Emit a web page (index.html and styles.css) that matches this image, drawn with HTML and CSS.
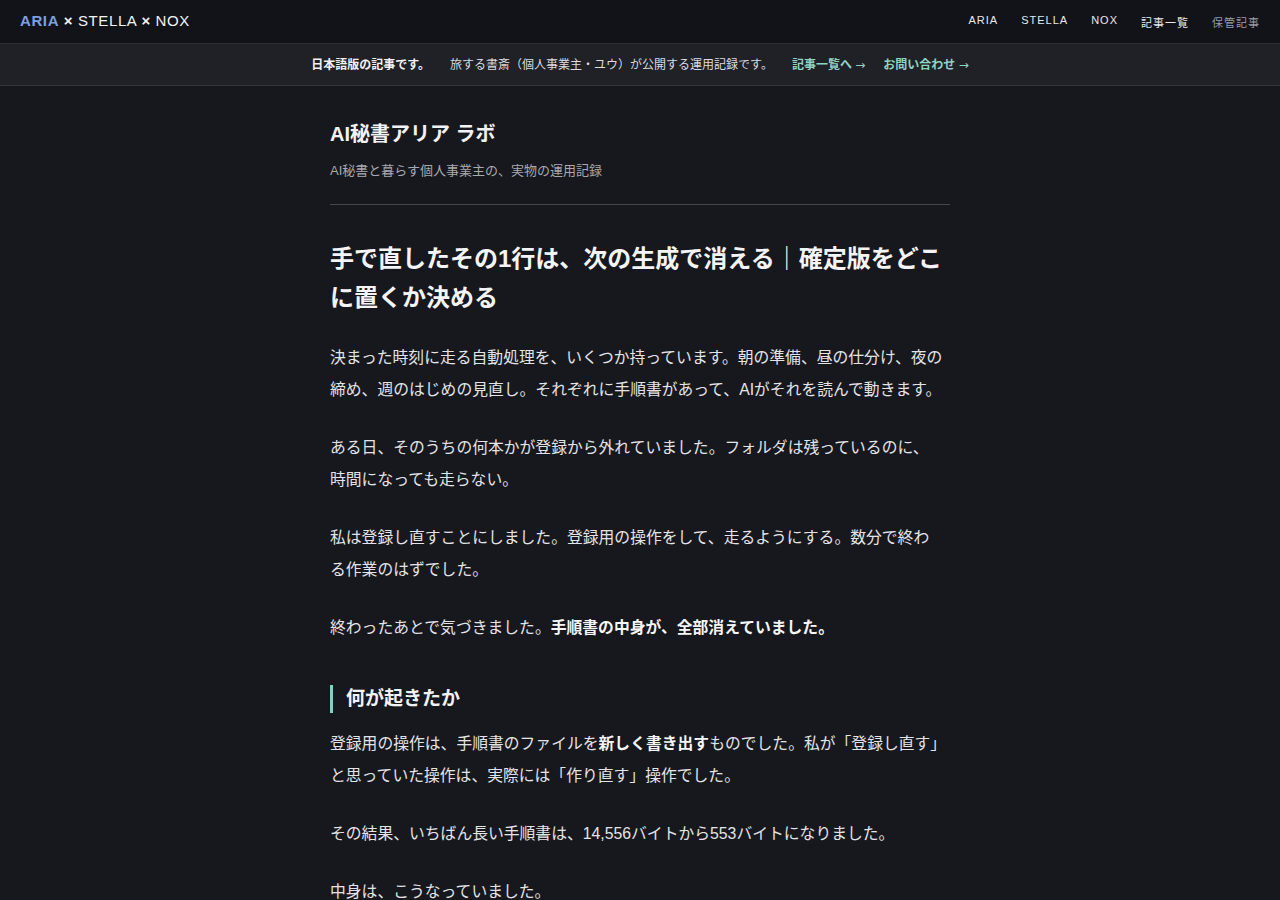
FILE: index.html
```html
<!DOCTYPE html>
<html lang="ja">
<head>
<meta charset="utf-8">
<title>AI秘書アリア ラボ</title>
<link rel="stylesheet" href="styles.css">
</head>
<body>
<header class="topnav">
  <div class="brand"><span class="brand-aria">ARIA</span> <span class="brand-x">×</span> STELLA <span class="brand-x">×</span> NOX</div>
  <nav class="navlinks">
    <a class="navlink" href="#">ARIA</a>
    <a class="navlink" href="#">STELLA</a>
    <a class="navlink" href="#">NOX</a>
    <a class="navlink" href="#">記事一覧</a>
    <a class="navlink navlink-muted" href="#">保管記事</a>
  </nav>
</header>
<div class="notice">
  <span class="notice-strong">日本語版の記事です。</span>
  <span class="notice-text">旅する書斎（個人事業主・ユウ）が公開する運用記録です。</span>
  <a class="notice-link" href="#">記事一覧へ <span class="arrow">→</span></a>
  <a class="notice-link" href="#">お問い合わせ <span class="arrow">→</span></a>
</div>
<main class="content">
  <div class="site-head">
    <div class="site-title">AI秘書アリア ラボ</div>
    <div class="site-sub">AI秘書と暮らす個人事業主の、実物の運用記録</div>
  </div>
  <article class="post">
    <h1 class="post-title">手で直したその1行は、次の生成で消える｜確定版をどこに置くか決める</h1>
    <p>決まった時刻に走る自動処理を、いくつか持っています。朝の準備、昼の仕分け、夜の<br>締め、週のはじめの見直し。それぞれに手順書があって、AIがそれを読んで動きます。</p>
    <p>ある日、そのうちの何本かが登録から外れていました。フォルダは残っているのに、<br>時間になっても走らない。</p>
    <p>私は登録し直すことにしました。登録用の操作をして、走るようにする。数分で終わ<br>る作業のはずでした。</p>
    <p>終わったあとで気づきました。<strong>手順書の中身が、全部消えていました。</strong></p>
    <h2 class="section-title">何が起きたか</h2>
    <p>登録用の操作は、手順書のファイルを<strong>新しく書き出す</strong>ものでした。私が「登録し直す」<br>と思っていた操作は、実際には「作り直す」操作でした。</p>
    <p>その結果、いちばん長い手順書は、14,556バイトから553バイトになりました。</p>
    <p>中身は、こうなっていました。</p>
  </article>
</main>
</body>
</html>
```
FILE: styles.css
```css
html, body {
  margin: 0;
  padding: 0;
}
body {
  background: #17181d;
  color: #e6e6e8;
  font-family: "Liberation Sans", "Noto Sans CJK JP", sans-serif;
}
a {
  text-decoration: none;
}
.topnav {
  height: 44px;
  box-sizing: border-box;
  display: flex;
  align-items: center;
  justify-content: space-between;
  padding: 0 20px 2px;
  background: #121319;
  border-bottom: 1px solid #2c2e35;
}
.brand {
  font-size: 15px;
  letter-spacing: 0.6px;
  color: #f2f2f4;
  font-weight: 500;
}
.brand-aria {
  color: #7c9fe6;
  font-weight: 700;
}
.brand-x {
  font-weight: 700;
}
.navlinks {
  display: flex;
  gap: 23px;
  padding-top: 3px;
}
.navlink {
  font-size: 11px;
  letter-spacing: 1px;
  color: #e8e8ec;
}
.navlink-muted {
  color: #9a9ca6;
}
.notice {
  height: 42px;
  box-sizing: border-box;
  padding-bottom: 2px;
  background: #1f2127;
  border-bottom: 1px solid #34363d;
  display: flex;
  justify-content: center;
  align-items: center;
  gap: 18px;
  font-size: 12px;
  color: #dcdce0;
}
.notice-strong {
  color: #f2f2f4;
  font-weight: 700;
  margin-right: 2px;
}
.notice-link {
  color: #8fd3c3;
  font-weight: 700;
}
.notice-text + .notice-link {
  margin-left: 1px;
}
.arrow {
  font-family: "DejaVu Sans", sans-serif;
  font-weight: 400;
  font-size: 12px;
}
.content {
  width: 620px;
  margin: 0 auto;
  padding-top: 33px;
}
.site-head {
  padding-bottom: 23px;
  border-bottom: 1px solid #45474e;
}
.site-title {
  font-size: 20px;
  line-height: 30px;
  font-weight: 700;
  color: #f2f2f4;
}
.site-sub {
  margin-top: 12px;
  font-size: 13px;
  line-height: 20px;
  color: #a8a9b0;
}
.post-title {
  margin: 34px 0 25px;
  font-size: 24px;
  line-height: 39px;
  font-weight: 700;
  color: #f4f4f6;
}
.post p {
  margin: 0 0 26px;
  font-size: 15.8px;
  line-height: 32px;
  color: #e4e4e8;
}
.post strong {
  font-weight: 700;
  color: #f6f6f8;
}
.section-title {
  margin: 41px 0 15px;
  padding-left: 13px;
  border-left: 3px solid #7fd3bf;
  font-size: 19px;
  line-height: 28px;
  font-weight: 700;
  color: #f2f2f4;
}
```
